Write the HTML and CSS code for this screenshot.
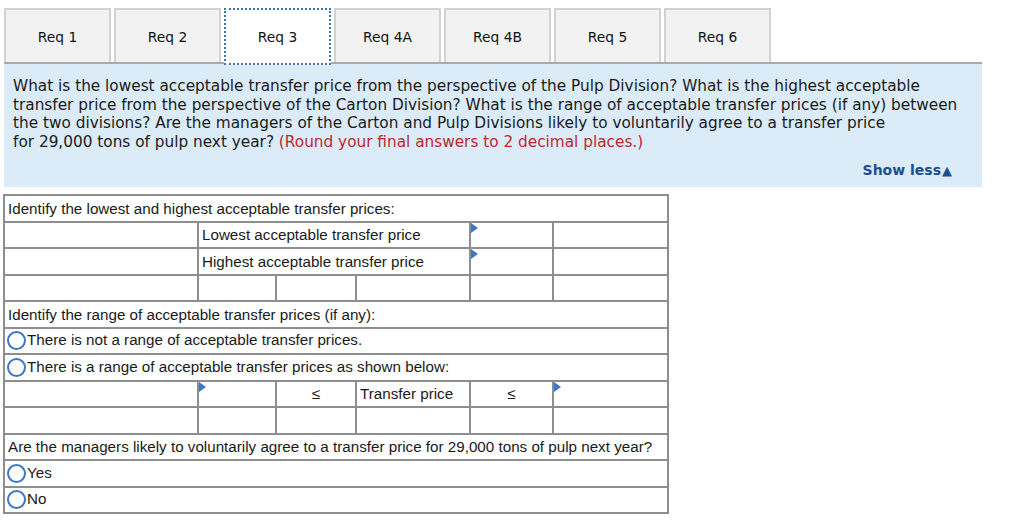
FILE: index.html
```html
<!DOCTYPE html>
<html lang="en">
<head>
    <meta charset="UTF-8">
    <title>Req 3</title>
    <link rel="stylesheet" href="styles.css">
</head>
<body>
    <div class="wrap">
        <div class="tabs">
            <div class="tab">Req 1</div>
            <div class="tab">Req 2</div>
            <div class="tab active">Req 3</div>
            <div class="tab">Req 4A</div>
            <div class="tab">Req 4B</div>
            <div class="tab">Req 5</div>
            <div class="tab">Req 6</div>
        </div>

        <div class="question">
            <p>What is the lowest acceptable transfer price from the perspective of the Pulp Division? What is the highest acceptable<br>
            transfer price from the perspective of the Carton Division? What is the range of acceptable transfer prices (if any) between<br>
            the two divisions? Are the managers of the Carton and Pulp Divisions likely to voluntarily agree to a transfer price<br>
            for 29,000 tons of pulp next year? <span class="hint">(Round your final answers to 2 decimal places.)</span></p>
            <div class="toggle">Show less<span class="arrow">&#9650;</span></div>
        </div>

        <table class="answer">
            <colgroup>
                <col class="c1">
                <col class="c2">
                <col class="c3">
                <col class="c4">
                <col class="c5">
                <col class="c6">
            </colgroup>
            <tr>
                <td colspan="6">Identify the lowest and highest acceptable transfer prices:</td>
            </tr>
            <tr>
                <td></td>
                <td colspan="3">Lowest acceptable transfer price</td>
                <td class="input"></td>
                <td></td>
            </tr>
            <tr>
                <td></td>
                <td colspan="3">Highest acceptable transfer price</td>
                <td class="input"></td>
                <td></td>
            </tr>
            <tr>
                <td></td><td></td><td></td><td></td><td></td><td></td>
            </tr>
            <tr>
                <td colspan="6">Identify the range of acceptable transfer prices (if any):</td>
            </tr>
            <tr>
                <td colspan="6" class="option"><span class="radio"></span>There is not a range of acceptable transfer prices.</td>
            </tr>
            <tr>
                <td colspan="6" class="option"><span class="radio"></span>There is a range of acceptable transfer prices as shown below:</td>
            </tr>
            <tr>
                <td></td>
                <td class="input"></td>
                <td class="center">&le;</td>
                <td>Transfer price</td>
                <td class="center">&le;</td>
                <td class="input"></td>
            </tr>
            <tr>
                <td></td><td></td><td></td><td></td><td></td><td></td>
            </tr>
            <tr>
                <td colspan="6">Are the managers likely to voluntarily agree to a transfer price for 29,000 tons of pulp next year?</td>
            </tr>
            <tr>
                <td colspan="6" class="option"><span class="radio"></span>Yes</td>
            </tr>
            <tr>
                <td colspan="6" class="option"><span class="radio"></span>No</td>
            </tr>
        </table>
    </div>
</body>
</html>
```

FILE: styles.css
```css
body {
    margin: 0;
    background: #fff;
    font-family: 'DejaVu Sans', Verdana, sans-serif;
    color: #222;
}
.wrap {
    padding: 8px 4px;
}
.tabs {
    display: flex;
    gap: 3px;
    height: 54px;
}
.tab {
    width: 107px;
    box-sizing: border-box;
    border: 2px solid #d2d2d2;
    border-bottom: none;
    background-color: #f2f2f2;
    font-size: 13.8px;
    color: #111;
    display: flex;
    justify-content: center;
    align-items: center;
    padding-top: 2px;
}
.tab.active {
    background-color: #fff;
    border: 2px dotted #3d73bb;
    height: 57px;
    padding-top: 0;
    position: relative;
    z-index: 1;
}
.question {
    width: 978px;
    height: 125px;
    box-sizing: border-box;
    background-color: #dbebf8;
    border-top: 2px solid #a9a9a9;
    padding: 13px 0 0 9px;
}
.question p {
    margin: 0;
    font-size: 15.3px;
    line-height: 18.5px;
    color: #1a1a1a;
    white-space: nowrap;
}
.hint {
    color: #c1272d;
}
.toggle {
    margin-top: 11px;
    padding-right: 30px;
    text-align: right;
    font-size: 14px;
    font-weight: bold;
    color: #1d4f8f;
}
.arrow {
    font-size: 13px;
    margin-left: 1px;
}
.answer {
    margin-top: 7px;
    margin-left: -1px;
    width: 664px;
    table-layout: fixed;
    border-collapse: collapse;
    font-family: 'Liberation Sans', Arial, sans-serif;
    font-size: 15.2px;
    color: #1a1a1a;
}
.c1 { width: 194px; }
.c2 { width: 78px; }
.c3 { width: 80px; }
.c4 { width: 114px; }
.c5 { width: 83px; }
.c6 { width: 115px; }
.answer td {
    border: 2px solid #8e8e8e;
    height: 24.5px;
    padding: 0 3px;
    white-space: nowrap;
    position: relative;
}
.answer td.center {
    text-align: center;
}
.answer td.option {
    padding-left: 2px;
}
.answer td.input::before {
    content: '';
    position: absolute;
    top: 0;
    left: 0;
    border-left: 7px solid #3c78c6;
    border-top: 5px solid transparent;
    border-bottom: 5px solid transparent;
}
.radio {
    display: inline-block;
    width: 15px;
    height: 15px;
    border: 2px solid #3c78c6;
    border-radius: 50%;
    vertical-align: -5px;
    margin-right: 1px;
}
```
